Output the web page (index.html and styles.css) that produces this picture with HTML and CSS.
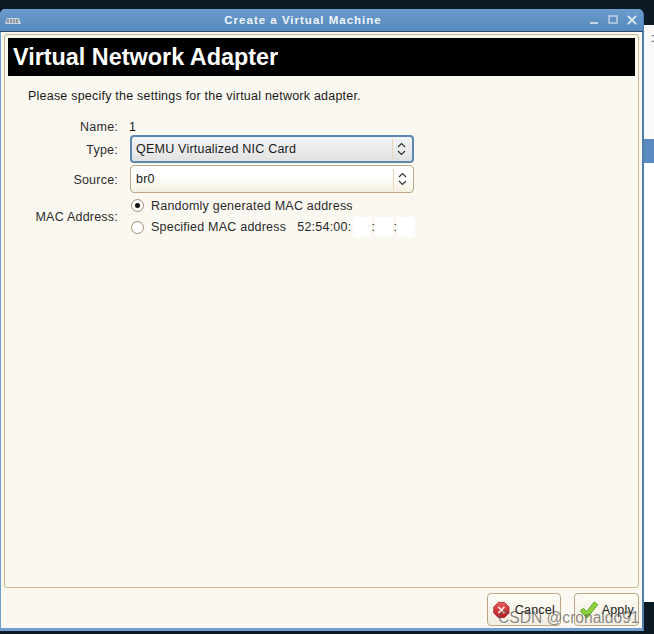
FILE: index.html
```html
<!DOCTYPE html>
<html lang="en">
<head>
<meta charset="utf-8">
<title>Create a Virtual Machine</title>
<link rel="stylesheet" href="styles.css">
</head>
<body>
<div class="desktop">
  <div class="window">
    <div class="titlebar">
      <svg class="app-icon" width="16" height="8" viewBox="0 0 16 8"><path d="M0 7 L2 1 H14 L16 7 Z" fill="#c9d3dc"/><path d="M3 2v4M6 2v4M9 2v4M12 2v4" stroke="#4a5a68" stroke-width="1"/></svg>
      <span class="title">Create a Virtual Machine</span>
      <div class="controls">
        <svg width="10" height="10" viewBox="0 0 10 10"><rect x="1" y="7" width="8" height="2" fill="#c6d6e8"/></svg>
        <svg width="10" height="10" viewBox="0 0 10 10"><rect x="1" y="1" width="8" height="7" fill="none" stroke="#c6d6e8" stroke-width="1.4"/></svg>
        <svg width="10" height="10" viewBox="0 0 10 10"><path d="M1 1 L9 9 M9 1 L1 9" stroke="#d6e2ee" stroke-width="2"/></svg>
      </div>
    </div>
    <div class="content">
      <div class="panel">
        <h1 class="banner">Virtual Network Adapter</h1>
        <p class="intro">Please specify the settings for the virtual network adapter.</p>
        <div class="form">
          <div class="label name-label">Name:</div>
          <div class="value">1</div>
          <div class="label">Type:</div>
          <div class="combo focused"><span class="combo-text">QEMU Virtualized NIC Card</span><span class="sep"></span>
            <svg class="updown" width="9" height="14" viewBox="0 0 9 14"><path d="M1 5 L4.5 1.5 L8 5 M1 9 L4.5 12.5 L8 9" fill="none" stroke="#2e3436" stroke-width="1.2"/></svg></div>
          <div class="label">Source:</div>
          <div class="combo source"><span class="combo-text">br0</span><span class="sep"></span>
            <svg class="updown" width="9" height="14" viewBox="0 0 9 14"><path d="M1 5 L4.5 1.5 L8 5 M1 9 L4.5 12.5 L8 9" fill="none" stroke="#2e3436" stroke-width="1.2"/></svg></div>
          <div class="label mac-label">MAC Address:</div>
          <div class="radios">
            <div class="radio-row"><span class="radio checked"></span><span>Randomly generated MAC address</span></div>
            <div class="radio-row"><span class="radio"></span><span class="spec">Specified MAC address</span><span class="mac"><span class="prefix">52:54:00:</span><span class="octet"></span><span class="colon">:</span><span class="octet"></span><span class="colon">:</span><span class="octet"></span></span></div>
          </div>
        </div>
      </div>
      <div class="actions">
        <button class="btn cancel" type="button">
          <svg width="20" height="20" viewBox="0 0 22 22"><defs><linearGradient id="red" x1="0" y1="0" x2="0" y2="1"><stop offset="0" stop-color="#e8585a"/><stop offset="1" stop-color="#c01c20"/></linearGradient></defs><path d="M7 1 H15 L21 7 V15 L15 21 H7 L1 15 V7 Z" fill="url(#red)" stroke="#8f1518"/><path d="M7 7 L15 15 M15 7 L7 15" stroke="#f4e4e0" stroke-width="2.2"/></svg>
          <span>Cancel</span>
        </button>
        <button class="btn apply" type="button">
          <svg width="20" height="20" viewBox="0 0 22 22"><path d="M1.5 12 L5 9 L8.5 13 L17 2 L21 5 L9 20 Z" fill="#8fd43c" stroke="#4e9a06"/></svg>
          <span>Apply</span>
        </button>
      </div>
    </div>
    <div class="watermark">CSDN @cronaldo91</div>
  </div>
  <div class="side">
    <div class="side-top"><span class="side-colon">:</span></div>
    <div class="side-blue"></div>
    <div class="side-bottom"></div>
  </div>
</div>
</body>
</html>
```
FILE: styles.css
```css
* { box-sizing: border-box; }
html, body { margin: 0; height: 100%; background: #0c1a26; overflow: hidden; }
body { font-family: "Liberation Sans", sans-serif; font-size: 12.5px; letter-spacing: 0.22px; color: #1a1a1a; }
.desktop { display: flex; height: 634px; padding-top: 9px; }
.window {
  position: relative;
  width: 644px; height: 622px; flex: none;
  display: flex; flex-direction: column;
  background: #fbf8f1;
  border-left: 1px solid #6f9fd0; border-right: 2px solid #4f7eae; border-bottom: 3px solid #6f9fd0;
  border-radius: 6px 6px 0 0;
}
.titlebar {
  height: 23px; flex: none;
  display: flex; align-items: center; justify-content: center; position: relative;
  padding-right: 37px;
  background: linear-gradient(#6a9ccd, #5688bb);
  border-bottom: 1px solid #2b4a6c;
  border-radius: 5px 5px 0 0;
  margin: 0 -1px 0 -1px;
}
.app-icon { position: absolute; left: 5px; top: 8px; }
.title { color: #eef3f8; font-weight: bold; font-size: 11.5px; letter-spacing: 1px; }
.controls { position: absolute; right: 6px; top: 6px; display: flex; gap: 9px; }
.content { flex: 1; display: flex; flex-direction: column; padding: 2px 3px 0 3px; min-height: 0; }
.panel { flex: 1; border: 1px solid #cdb98f; border-radius: 3px; padding: 3px; min-height: 0; background: #fbf8f1; }
.banner { margin: 0; background: #000; color: #fff; font-size: 23.4px; letter-spacing: 0; font-weight: bold; height: 38px; line-height: 39px; padding-left: 5px; }
.intro { margin: 0; padding: 13px 0 0 20px; line-height: 14px; }
.form { display: grid; grid-template-columns: 110px 284px; column-gap: 12px; margin-top: 17px; }
.label { text-align: right; display: flex; align-items: center; justify-content: flex-end; color: #2b2b2b; }
.name-label { height: 14px; }
.value { height: 16px; line-height: 14px; margin-bottom: -1px; margin-left: -1px; }
.combo {
  height: 28px; margin-bottom: 2px; display: flex; align-items: center; padding: 0 6px 0 5px;
  border: 1px solid #bba883; border-radius: 4px;
  background: linear-gradient(#ffffff 45%, #f4efe0);
}
.combo.focused { border: 2px solid #5d86b0; padding-left: 4px; background: linear-gradient(#f2f4f8, #e2e3e0); }
.combo-text { flex: 1; }
.sep { width: 1px; height: 20px; background: #e6d6b4; margin-right: 4px; }
.updown { flex: none; }
.radios { display: flex; flex-direction: column; }
.radio-row { display: flex; align-items: center; height: 21.5px; gap: 7px; color: #2b2b2b; white-space: nowrap; }
.radio { width: 13px; height: 13px; border-radius: 50%; border: 1px solid #9c8f78; background: #fff; flex: none; display: inline-block; margin-left: 1px; position: relative; }
.radio.checked::after { content: ""; position: absolute; left: 3px; top: 3px; width: 5px; height: 5px; border-radius: 50%; background: #111; }
.mac { display: flex; align-items: center; margin-left: 4px; }
.prefix { width: 56px; }
.octet { width: 18px; height: 20px; background: #fff; }
.colon { width: 4px; text-align: center; }
.actions { flex: none; height: 40px; display: flex; justify-content: flex-end; gap: 13px; padding-top: 5px; }
.btn {
  height: 33px; display: flex; align-items: center; gap: 5px; padding: 0 5px;
  font: inherit; letter-spacing: inherit; color: #1a1a1a; background: linear-gradient(#fdfbf6, #f3eee2);
  border: 1px solid #bba883; border-radius: 4px;
}
.cancel { width: 74px; }
.apply { width: 65px; padding: 0 4px; gap: 3px; }
.watermark { position: absolute; left: 497px; top: 600px; color: rgba(90, 90, 90, 0.7); font-family: "Liberation Sans", sans-serif; font-size: 15.6px; letter-spacing: 0; white-space: nowrap; }
.side { flex: 1; display: flex; flex-direction: column; margin-top: 16px; }
.side-top { height: 114px; background: #f9f9f9; }
.side-colon { padding-left: 7px; line-height: 14px; display: block; padding-top: 6px; color: #222; }
.side-blue { height: 24px; background: #5b8ac0; }
.side-bottom { flex: 1; background: #ffffff; margin-bottom: 32px; }
```
